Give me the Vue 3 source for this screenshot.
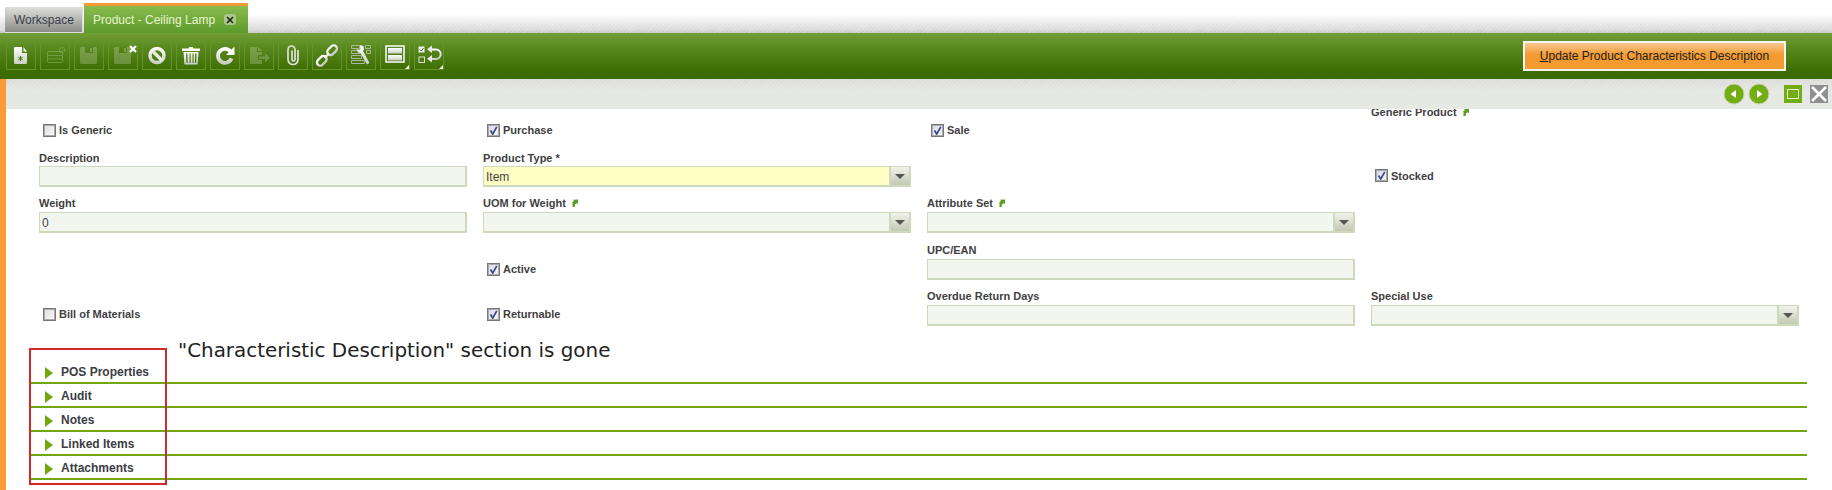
<script setup>
const fields = [
  { type: 'check', label: 'Is Generic' },
  { type: 'check', label: 'Purchase', on: true },
  { type: 'check', label: 'Sale', on: true },
  { type: 'head', label: 'Generic Product', link: true },
  { type: 'text', label: 'Description', tight: true },
  { type: 'select', label: 'Product Type *', value: 'Item', req: true, tight: true },
  { type: 'none' },
  { type: 'check', label: 'Stocked', on: true },
  { type: 'text', label: 'Weight', value: '0' },
  { type: 'select', label: 'UOM for Weight', link: true },
  { type: 'select', label: 'Attribute Set', link: true },
  { type: 'none' },
  { type: 'none' },
  { type: 'check', label: 'Active', on: true, low: true },
  { type: 'text', label: 'UPC/EAN' },
  { type: 'none' },
  { type: 'check', label: 'Bill of Materials' },
  { type: 'check', label: 'Returnable', on: true },
  { type: 'text', label: 'Overdue Return Days' },
  { type: 'select', label: 'Special Use' }
]
const sections = ['POS Properties', 'Audit', 'Notes', 'Linked Items', 'Attachments']
</script>

<template>
  <div class="page">
    <div class="tabs">
      <div class="tab ws">Workspace</div>
      <div class="tab prod">
        <span>Product - Ceiling Lamp</span>
        <span class="tabx">
          <svg width="8" height="8" viewBox="0 0 8 8"><path d="M1 1l6 6M7 1l-6 6" stroke="#222" stroke-width="1.6" /></svg>
        </span>
      </div>
    </div>

    <div class="toolbar">
      <div class="tools">
        <div class="tb">
          <svg width="28" height="26" viewBox="1 1 28 26">
            <defs>
              <linearGradient id="w" x1="0" y1="0" x2="0" y2="1"><stop offset="0" stop-color="#fff" /><stop offset="1" stop-color="#c9cfc2" /></linearGradient>
            </defs>
            <path d="M9 5h7v6h5v10a1 1 0 0 1-1 1H9a1 1 0 0 1-1-1V6a1 1 0 0 1 1-1z" fill="url(#w)" />
            <path d="M17.500 5l3.500 4.500h-3.500z" fill="#fff" />
            <path d="M14.500 14v5M12.300 15.200l4.400 2.600M16.700 15.200l-4.400 2.600" stroke="#3f7a08" stroke-width="1" />
          </svg>
        </div>
        <div class="tb dim">
          <svg width="28" height="26" viewBox="1 1 28 26" fill="none" stroke="#fff">
            <rect x="7.500" y="9.500" width="15" height="11" rx="1.500" /><path d="M7.500 13.500h15M7.500 17h15" />
            <circle cx="22" cy="8" r="2.500" stroke-dasharray="1.500 .8" stroke-width="1.500" />
          </svg>
        </div>
        <div class="tb dim">
          <svg width="28" height="26" viewBox="1 1 28 26">
            <path d="M7 5h15l1 1v15l-1 1H7l-1-1V6z" fill="#fff" />
            <path d="M11 5h8v6h-8z" fill="#4a7a18" /><rect x="16" y="6" width="2" height="4" fill="#fff" />
          </svg>
        </div>
        <div class="tb">
          <svg class="dimsvg" width="28" height="26" viewBox="1 1 28 26">
            <path d="M7 5h15l1 1v15l-1 1H7l-1-1V6z" fill="#fff" />
            <path d="M11 5h8v6h-8z" fill="#4a7a18" /><rect x="16" y="6" width="2" height="4" fill="#fff" />
          </svg>
          <svg class="xmark" width="8" height="8" viewBox="0 0 8 8"><path d="M1 1l6 6M7 1l-6 6" stroke="#fff" stroke-width="2.200" /></svg>
        </div>
        <div class="tb">
          <svg width="28" height="26" viewBox="1 1 28 26" fill="none">
            <circle cx="15" cy="13.500" r="7" stroke="url(#w)" stroke-width="3.400" />
            <path d="M10 8.500l10 10" stroke="#e8ebe4" stroke-width="3.400" />
          </svg>
        </div>
        <div class="tb">
          <svg width="28" height="26" viewBox="1 1 28 26">
            <path d="M6 6.500h6.500l.8-1.500h3.400l.8 1.500H24V9H6z" fill="#fff" />
            <path d="M7.500 10h15l-1 12.500h-13zM10 11.500l.4 9.500h1.300l-.3-9.500zM13.500 11.500V21h1.200v-9.500zM16.500 11.500V21h1.200v-9.500zM19.200 11.500l-.3 9.500h1.300l.4-9.500z" fill="url(#w)" fill-rule="evenodd" />
          </svg>
        </div>
        <div class="tb">
          <svg width="28" height="26" viewBox="1 1 28 26" fill="none">
            <path d="M21.500 16.500a7 7 0 1 1-.6-6.500" stroke="url(#w)" stroke-width="3.800" />
            <path d="M24.500 4.500v8.500H16z" fill="#fff" />
          </svg>
        </div>
        <div class="tb dim">
          <svg width="28" height="26" viewBox="1 1 28 26">
            <path d="M6 5h7v5h5v3h-4v5h4v4H6zM14 5l4 4h-4z" fill="#fff" />
            <path d="M15 14.500h6V11l5 4.800-5 4.700v-3.500h-6z" fill="#fff" />
          </svg>
        </div>
        <div class="tb">
          <svg width="28" height="26" viewBox="1 1 28 26" fill="none">
            <path d="M14 8.500v9a1.500 1.500 0 0 0 3 0V7.500a3.500 3.500 0 0 0-7 0V17.500a5 5 0 0 0 10 0V8" stroke="#dfe3d9" stroke-width="1.700" />
          </svg>
        </div>
        <div class="tb">
          <svg width="28" height="26" viewBox="1 1 28 26" fill="none" stroke="url(#w)" stroke-width="2.300">
            <rect x="14.500" y="5" width="11" height="6.500" rx="3.200" transform="rotate(-45 20 8)" />
            <rect x="4.500" y="15.500" width="11" height="6.500" rx="3.200" transform="rotate(-45 10 19)" />
            <path d="M12.500 16l4.500-4.500" stroke="#eee" />
          </svg>
        </div>
        <div class="tb">
          <svg width="28" height="26" viewBox="1 1 28 26">
            <path d="M5.500 3.500h8v3h-8zM19.500 3.500h5v3h-5zM5.500 8.500h9v3h-9zM20.500 8.500h4v3h-4zM5.500 13.500h10v3h-10zM5.500 18.500h13v3h-13z" fill="none" stroke="#a9b79a" stroke-width="1" />
            <path d="M14 3l3.500 1.200.5 3.300-1 1.500 6.500 12-2.500 1.500-6.500-11.500-2.500-.5-1.500-3.500 2.300 1 1.500-1.300z" fill="url(#w)" />
          </svg>
        </div>
        <div class="tb">
          <svg width="28" height="26" viewBox="1 1 28 26">
            <rect x="6" y="4" width="18" height="16" fill="none" stroke="#fff" stroke-width="1.500" />
            <rect x="8" y="6" width="14" height="5.500" fill="url(#w)" /><rect x="8" y="13" width="14" height="5.500" fill="url(#w)" />
          </svg>
          <i class="corner"></i>
        </div>
        <div class="tb">
          <svg width="28" height="26" viewBox="1 1 28 26" fill="none">
            <rect x="4.500" y="4.500" width="6" height="6" fill="#eee" /><path d="M5.800 7.500l1.500 1.500 2.300-3" stroke="#4a7a18" stroke-width="1" />
            <rect x="5" y="15" width="5.500" height="5.500" stroke="#ddd" />
            <path d="M15 7.500h7a4.700 4.700 0 0 1 0 9.400h-6" stroke="url(#w)" stroke-width="2" />
            <path d="M18 3.500v7.500l-5-3.700zM18 13v7.500l-5-3.700z" fill="#e8e8e8" />
          </svg>
          <i class="corner"></i>
        </div>
      </div>
      <div class="action"><span><u>U</u>pdate Product Characteristics Description</span></div>
    </div>

    <div class="body">
      <div class="strip"></div>
      <div class="main">
        <div class="band">
          <svg class="nav" width="22" height="22" viewBox="0 0 22 22"><circle cx="11" cy="11" r="10" fill="#73ad14" stroke="#c7d4ad" /><path d="M13 7v8L7.500 11z" fill="#fff" /></svg>
          <svg class="nav next" width="22" height="22" viewBox="0 0 22 22"><circle cx="11" cy="11" r="10" fill="#73ad14" stroke="#c7d4ad" /><path d="M9 7v8l5.500-4z" fill="#fff" /></svg>
          <div class="mx"><i></i></div>
          <div class="cl">
            <svg width="18" height="18" viewBox="0 0 18 18"><path d="M2 2l14 14M16 2L2 16" stroke="#fff" stroke-width="2.600" /></svg>
          </div>
        </div>

        <div class="form">
          <div v-for="(f, i) in fields" :key="i" class="cell" :class="[f.type, { low: f.low, tight: f.tight }]">
            <template v-if="f.type === 'check'">
              <span class="box" :class="{ on: f.on }">
                <svg v-if="f.on" width="11" height="11" viewBox="0 0 11 11"><path d="M2.500 5.500l2.200 3.500L8.800 1.800" fill="none" stroke="#3c4a8c" stroke-width="1.700" /></svg>
              </span>
              <span class="lbl">{{ f.label }}</span>
            </template>
            <template v-else-if="f.type !== 'none'">
              <div class="lbl">
                {{ f.label }}
                <svg v-if="f.link" class="lnk" width="7" height="8" viewBox="0 0 7 8"><path d="M1.500 8V3.500H.8L3 2 2 .8 7 .5 6.800 5.500 5.700 4.200 3.800 5.500V8z" fill="#5d9a1f" /></svg>
              </div>
              <div v-if="f.type !== 'head'" class="inp" :class="{ req: f.req }">
                <span class="val">{{ f.value }}</span>
                <span v-if="f.type === 'select'" class="drop"><i></i></span>
              </div>
            </template>
          </div>
        </div>

        <div class="sections">
          <div v-for="s in sections" :key="s" class="sec">
            <i class="tri"></i><span>{{ s }}</span>
          </div>
        </div>

        <div class="redbox"></div>
        <div class="note">"Characteristic Description" section is gone</div>
      </div>
    </div>
  </div>
</template>

<style scoped>
.page {
  width: 1832px;
  height: 490px;
  overflow: hidden;
  background: #fff;
  font-family: "Liberation Sans", Arial, sans-serif;
  color: #3c3c3c;
}
.tabs {
  height: 33px;
  box-sizing: border-box;
  padding: 3px 0 0 5px;
  display: flex;
  align-items: flex-end;
  gap: 1px;
  background:
    repeating-linear-gradient(135deg, rgba(255, 255, 255, 0.2) 0 1px, transparent 1px 3px),
    linear-gradient(#fff 14px, #d9d9d9 30px, #c4c4c4);
}
.tab {
  font-size: 12px;
  display: flex;
  align-items: center;
  box-sizing: border-box;
}
.ws {
  width: 78px;
  height: 26px;
  padding-left: 9px;
  color: #3d3d4d;
  background: linear-gradient(#dfe0dc, #8c8d88);
  border-right: 1px solid #ddd;
  border-bottom: 1px solid #ddd;
}
.prod {
  width: 164px;
  height: 30px;
  padding-left: 9px;
  color: #e8f2cf;
  border-top: 3px solid #f39a33;
  background: linear-gradient(#8abb4d, #5d9a2c);
  gap: 9px;
}
.tabx {
  width: 12px;
  height: 11px;
  background: #a6c987;
  border-radius: 3px;
  display: flex;
  align-items: center;
  justify-content: center;
}
.toolbar {
  height: 46px;
  box-sizing: border-box;
  padding: 9px 46px 0 6px;
  display: flex;
  justify-content: space-between;
  background: linear-gradient(#729f36, #5a8a1f 30%, #3c6c00 85%, #3c6c00);
}
.tools {
  display: flex;
  gap: 4px;
  align-items: flex-start;
}
.tb {
  position: relative;
  width: 30px;
  height: 28px;
  box-sizing: border-box;
  border: 1px solid #64932c;
}
.tb svg {
  display: block;
}
.tb .dimsvg,
.tb.dim svg {
  opacity: 0.2;
}
.xmark {
  position: absolute;
  top: 2px;
  right: 0;
}
.corner {
  position: absolute;
  right: 0;
  bottom: 0;
  width: 0;
  height: 0;
  border-left: 4px solid transparent;
  border-bottom: 4px solid #eee;
}
.action {
  width: 263px;
  height: 30px;
  margin-top: -1px;
  box-sizing: border-box;
  border: 2px solid #f4f4f0;
  background: linear-gradient(#f7c893, #f39a30 45%);
  color: #222;
  font-size: 12px;
  display: flex;
  align-items: center;
  justify-content: center;
}
.body {
  display: flex;
  height: 411px;
}
.strip {
  width: 6px;
  flex: none;
  background: #fb9a36;
}
.main {
  position: relative;
  flex: 1;
}
.band {
  position: relative;
  z-index: 1;
  height: 30px;
  box-sizing: border-box;
  padding: 4px 4px 0 0;
  display: flex;
  justify-content: flex-end;
  align-items: flex-start;
  background:
    repeating-linear-gradient(135deg, rgba(255, 255, 255, 0.15) 0 1px, transparent 1px 3px) 0 0 / 100% 14px no-repeat,
    linear-gradient(#dcdcd8, #e6e9e3 14px);
}
.next {
  margin-left: 3px;
}
.mx {
  width: 18px;
  height: 18px;
  margin: 2px 0 0 14px;
  background: #73ad14;
  display: flex;
  align-items: center;
  justify-content: center;
}
.mx i {
  width: 10px;
  height: 8px;
  border: 1px solid #e6f0c9;
}
.cl {
  width: 18px;
  height: 18px;
  margin: 2px 0 0 8px;
  background: #8f8f8f;
}
.cl svg {
  display: block;
}
.form {
  margin-top: -4px;
  padding-left: 33px;
  display: grid;
  grid-template-columns: repeat(4, 428px);
  grid-template-rows: 46px 45px 47px 46px 46px;
  column-gap: 16px;
}
.cell {
  box-sizing: border-box;
}
.lbl {
  font-size: 11px;
  font-weight: bold;
  line-height: 14px;
  color: #3f3f3f;
}
.check {
  display: flex;
  align-items: center;
  padding: 18px 0 14px 4px;
  gap: 3px;
}
.check.low {
  padding-top: 19px;
  padding-bottom: 13px;
}
.box {
  width: 13px;
  height: 13px;
  box-sizing: border-box;
  border: 1px solid #777;
  outline: 1px solid #aaa;
  outline-offset: -2px;
  background: linear-gradient(135deg, #dedede, #fafafa);
  display: flex;
}
.box.on {
  background: linear-gradient(135deg, #d7dbe8, #f6f6fb);
}
.lnk {
  margin-left: 2px;
}
.inp {
  position: relative;
  height: 21px;
  margin-top: 2px;
  box-sizing: border-box;
  border: 1px solid #cdd9bb;
  border-width: 1px 2px 2px 1px;
  background: #f3f6ef;
  font-size: 12px;
  padding-left: 2px;
  line-height: 21px;
  color: #444;
}
.tight .inp {
  margin-top: 1px;
}
.req {
  background: #ffffc6;
}
.val {
  display: block;
}
.drop {
  position: absolute;
  top: 0;
  right: 0;
  bottom: 0;
  width: 18px;
  border-left: 2px solid #cdd9bb;
  background: linear-gradient(#f2f3ea, #c4c8b4);
  display: flex;
  align-items: center;
  justify-content: center;
}
.drop i {
  width: 0;
  height: 0;
  border: 5px solid transparent;
  border-top: 5px solid #555;
  border-bottom: 0;
}
.sections {
  margin: 25px 25px 0 24px;
}
.sec {
  height: 24px;
  box-sizing: border-box;
  border-bottom: 2px solid #72a80f;
  display: flex;
  align-items: center;
  padding: 1px 0 0 15px;
  font-size: 12px;
  font-weight: bold;
  color: #3c3c44;
}
.tri {
  width: 0;
  height: 0;
  margin: 2px 8px 0 0;
  border-left: 8px solid #72a80f;
  border-top: 6px solid transparent;
  border-bottom: 6px solid transparent;
}
.redbox {
  position: absolute;
  left: 23px;
  top: 269px;
  width: 138px;
  height: 137px;
  box-sizing: border-box;
  border: 2px solid #d22a2a;
}
.note {
  position: absolute;
  left: 172px;
  top: 261px;
  font-family: "DejaVu Sans", sans-serif;
  font-size: 19.9px;
  line-height: 22px;
  color: #222;
  white-space: nowrap;
}
</style>

<style>
html, body { margin: 0; background: #fff; }
</style>
